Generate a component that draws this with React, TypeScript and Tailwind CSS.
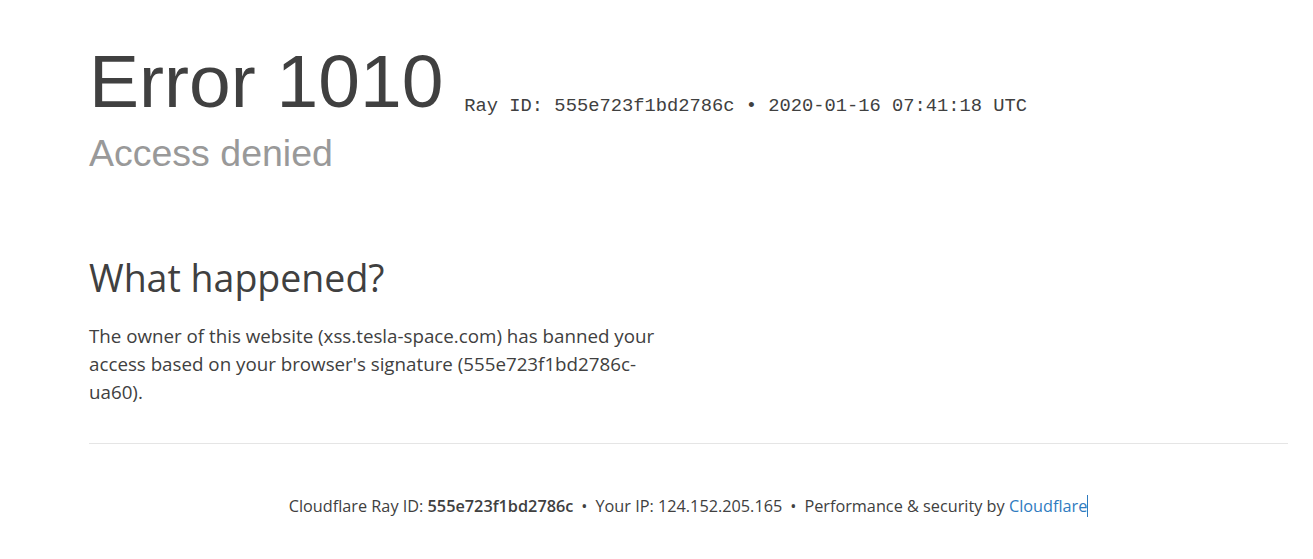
export default function App() {
  return (
    <div className="min-h-[559px] bg-white text-[#404040]">
      <div className="ml-[89px] w-[1199px]">
        <div className="pt-[36px]">
          <h1 className="flex items-baseline" style={{ fontFamily: "'Liberation Sans', Arial, sans-serif" }}>
            <span className="text-[75px] leading-[90px] text-[#404040]">Error 1010</span>
            <span
              className="ml-[21px] translate-y-[4px] text-[18.75px] text-[#404040]"
              style={{ fontFamily: "'Liberation Mono', 'Courier New', monospace" }}
            >
              Ray ID: 555e723f1bd2786c • 2020-01-16 07:41:18 UTC
            </span>
          </h1>
          <h2
            className="mt-[5px] text-[37.5px] leading-[45px] text-[#999999]"
            style={{ fontFamily: "'Liberation Sans', Arial, sans-serif" }}
          >
            Access denied
          </h2>
        </div>

        <section className="mt-[79px]" style={{ fontFamily: "'Open Sans', sans-serif" }}>
          <h2 className="text-[37.5px] leading-[45px] text-[#404040]">What happened?</h2>
          <p className="mt-[22px] w-[580px] text-[18.75px] leading-[28px] text-[#404040]">
            The owner of this website (xss.tesla-space.com) has banned your access based on your browser's signature
            (555e723f1bd2786c-ua60).
          </p>
        </section>

        <div className="mt-[37px] border-t border-[#e5e5e5]" />

        <footer
          className="mt-[50px] text-center text-[16.25px] leading-[24px] text-[#404040]"
          style={{ fontFamily: "'Open Sans', sans-serif" }}
        >
          <span>
            Cloudflare Ray ID: <strong className="font-semibold">555e723f1bd2786c</strong>
          </span>
          <span className="mx-[8px]">•</span>
          <span>Your IP: 124.152.205.165</span>
          <span className="mx-[8px]">•</span>
          <span>
            Performance &amp; security by{" "}
            <span className="border-r border-[#2f7bbf] text-[#2f7bbf]">Cloudflare</span>
          </span>
        </footer>
      </div>
    </div>
  );
}
